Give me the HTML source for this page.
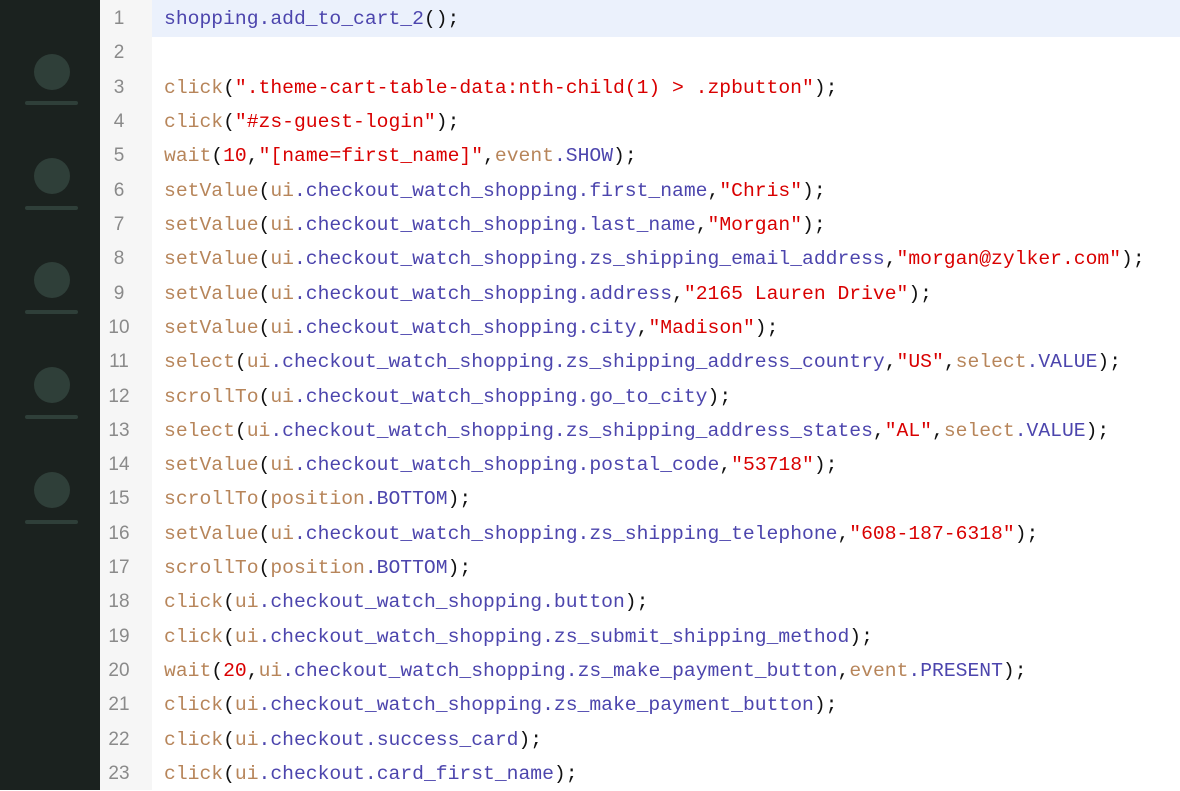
<!DOCTYPE html><html><head><style>
body{margin:0;width:1180px;height:790px;overflow:hidden;background:#fff;position:relative;font-family:"Liberation Mono",monospace;}
#side{position:absolute;left:0;top:0;width:100px;height:790px;background:#1b221f;}
.c{position:absolute;left:34px;width:36px;height:36px;border-radius:50%;background:#2f3f39;}
.b{position:absolute;left:25px;width:53px;height:4px;border-radius:2px;background:#2f3f39;}
#gut{position:absolute;left:100px;top:0;width:52px;height:790px;background:#f6f6f6;}
#hl{position:absolute;left:152px;top:0;width:1028px;height:37px;background:#ebf1fc;}
.l{position:absolute;left:0;height:34.32px;line-height:34.32px;font-size:19.7px;white-space:pre;}
.n{left:100px;width:38px;text-align:center;color:#8a8a8a;font-family:"Liberation Sans",sans-serif;font-size:19px;}
.t{left:164px;color:#111;}
.f{color:#b7855a}.s{color:#d90000}.p{color:#4c45ad}
</style></head><body>
<div id="side">
<div class="c" style="top:54px"></div><div class="b" style="top:101px"></div>
<div class="c" style="top:158px"></div><div class="b" style="top:206px"></div>
<div class="c" style="top:262px"></div><div class="b" style="top:310px"></div>
<div class="c" style="top:367px"></div><div class="b" style="top:415px"></div>
<div class="c" style="top:472px"></div><div class="b" style="top:520px"></div>
</div>
<div id="gut"></div><div id="hl"></div>
<div id="lines"></div>
<script>
var L=[
'<span class=p>shopping.add_to_cart_2</span>();',
'',
'<span class=f>click</span>(<span class=s>".theme-cart-table-data:nth-child(1) &gt; .zpbutton"</span>);',
'<span class=f>click</span>(<span class=s>"#zs-guest-login"</span>);',
'<span class=f>wait</span>(<span class=s>10</span>,<span class=s>"[name=first_name]"</span>,<span class=f>event</span><span class=p>.SHOW</span>);',
'<span class=f>setValue</span>(<span class=f>ui</span><span class=p>.checkout_watch_shopping.first_name</span>,<span class=s>"Chris"</span>);',
'<span class=f>setValue</span>(<span class=f>ui</span><span class=p>.checkout_watch_shopping.last_name</span>,<span class=s>"Morgan"</span>);',
'<span class=f>setValue</span>(<span class=f>ui</span><span class=p>.checkout_watch_shopping.zs_shipping_email_address</span>,<span class=s>"morgan@zylker.com"</span>);',
'<span class=f>setValue</span>(<span class=f>ui</span><span class=p>.checkout_watch_shopping.address</span>,<span class=s>"2165 Lauren Drive"</span>);',
'<span class=f>setValue</span>(<span class=f>ui</span><span class=p>.checkout_watch_shopping.city</span>,<span class=s>"Madison"</span>);',
'<span class=f>select</span>(<span class=f>ui</span><span class=p>.checkout_watch_shopping.zs_shipping_address_country</span>,<span class=s>"US"</span>,<span class=f>select</span><span class=p>.VALUE</span>);',
'<span class=f>scrollTo</span>(<span class=f>ui</span><span class=p>.checkout_watch_shopping.go_to_city</span>);',
'<span class=f>select</span>(<span class=f>ui</span><span class=p>.checkout_watch_shopping.zs_shipping_address_states</span>,<span class=s>"AL"</span>,<span class=f>select</span><span class=p>.VALUE</span>);',
'<span class=f>setValue</span>(<span class=f>ui</span><span class=p>.checkout_watch_shopping.postal_code</span>,<span class=s>"53718"</span>);',
'<span class=f>scrollTo</span>(<span class=f>position</span><span class=p>.BOTTOM</span>);',
'<span class=f>setValue</span>(<span class=f>ui</span><span class=p>.checkout_watch_shopping.zs_shipping_telephone</span>,<span class=s>"608-187-6318"</span>);',
'<span class=f>scrollTo</span>(<span class=f>position</span><span class=p>.BOTTOM</span>);',
'<span class=f>click</span>(<span class=f>ui</span><span class=p>.checkout_watch_shopping.button</span>);',
'<span class=f>click</span>(<span class=f>ui</span><span class=p>.checkout_watch_shopping.zs_submit_shipping_method</span>);',
'<span class=f>wait</span>(<span class=s>20</span>,<span class=f>ui</span><span class=p>.checkout_watch_shopping.zs_make_payment_button</span>,<span class=f>event</span><span class=p>.PRESENT</span>);',
'<span class=f>click</span>(<span class=f>ui</span><span class=p>.checkout_watch_shopping.zs_make_payment_button</span>);',
'<span class=f>click</span>(<span class=f>ui</span><span class=p>.checkout.success_card</span>);',
'<span class=f>click</span>(<span class=f>ui</span><span class=p>.checkout.card_first_name</span>);'
];
var h='';
for(var i=0;i<L.length;i++){var t=(2+34.32*i).toFixed(2);
h+='<div class="l n" style="top:'+t+'px">'+(i+1)+'</div><div class="l t" style="top:'+t+'px">'+L[i]+'</div>';}
document.getElementById('lines').innerHTML=h;
</script>
</body></html>
